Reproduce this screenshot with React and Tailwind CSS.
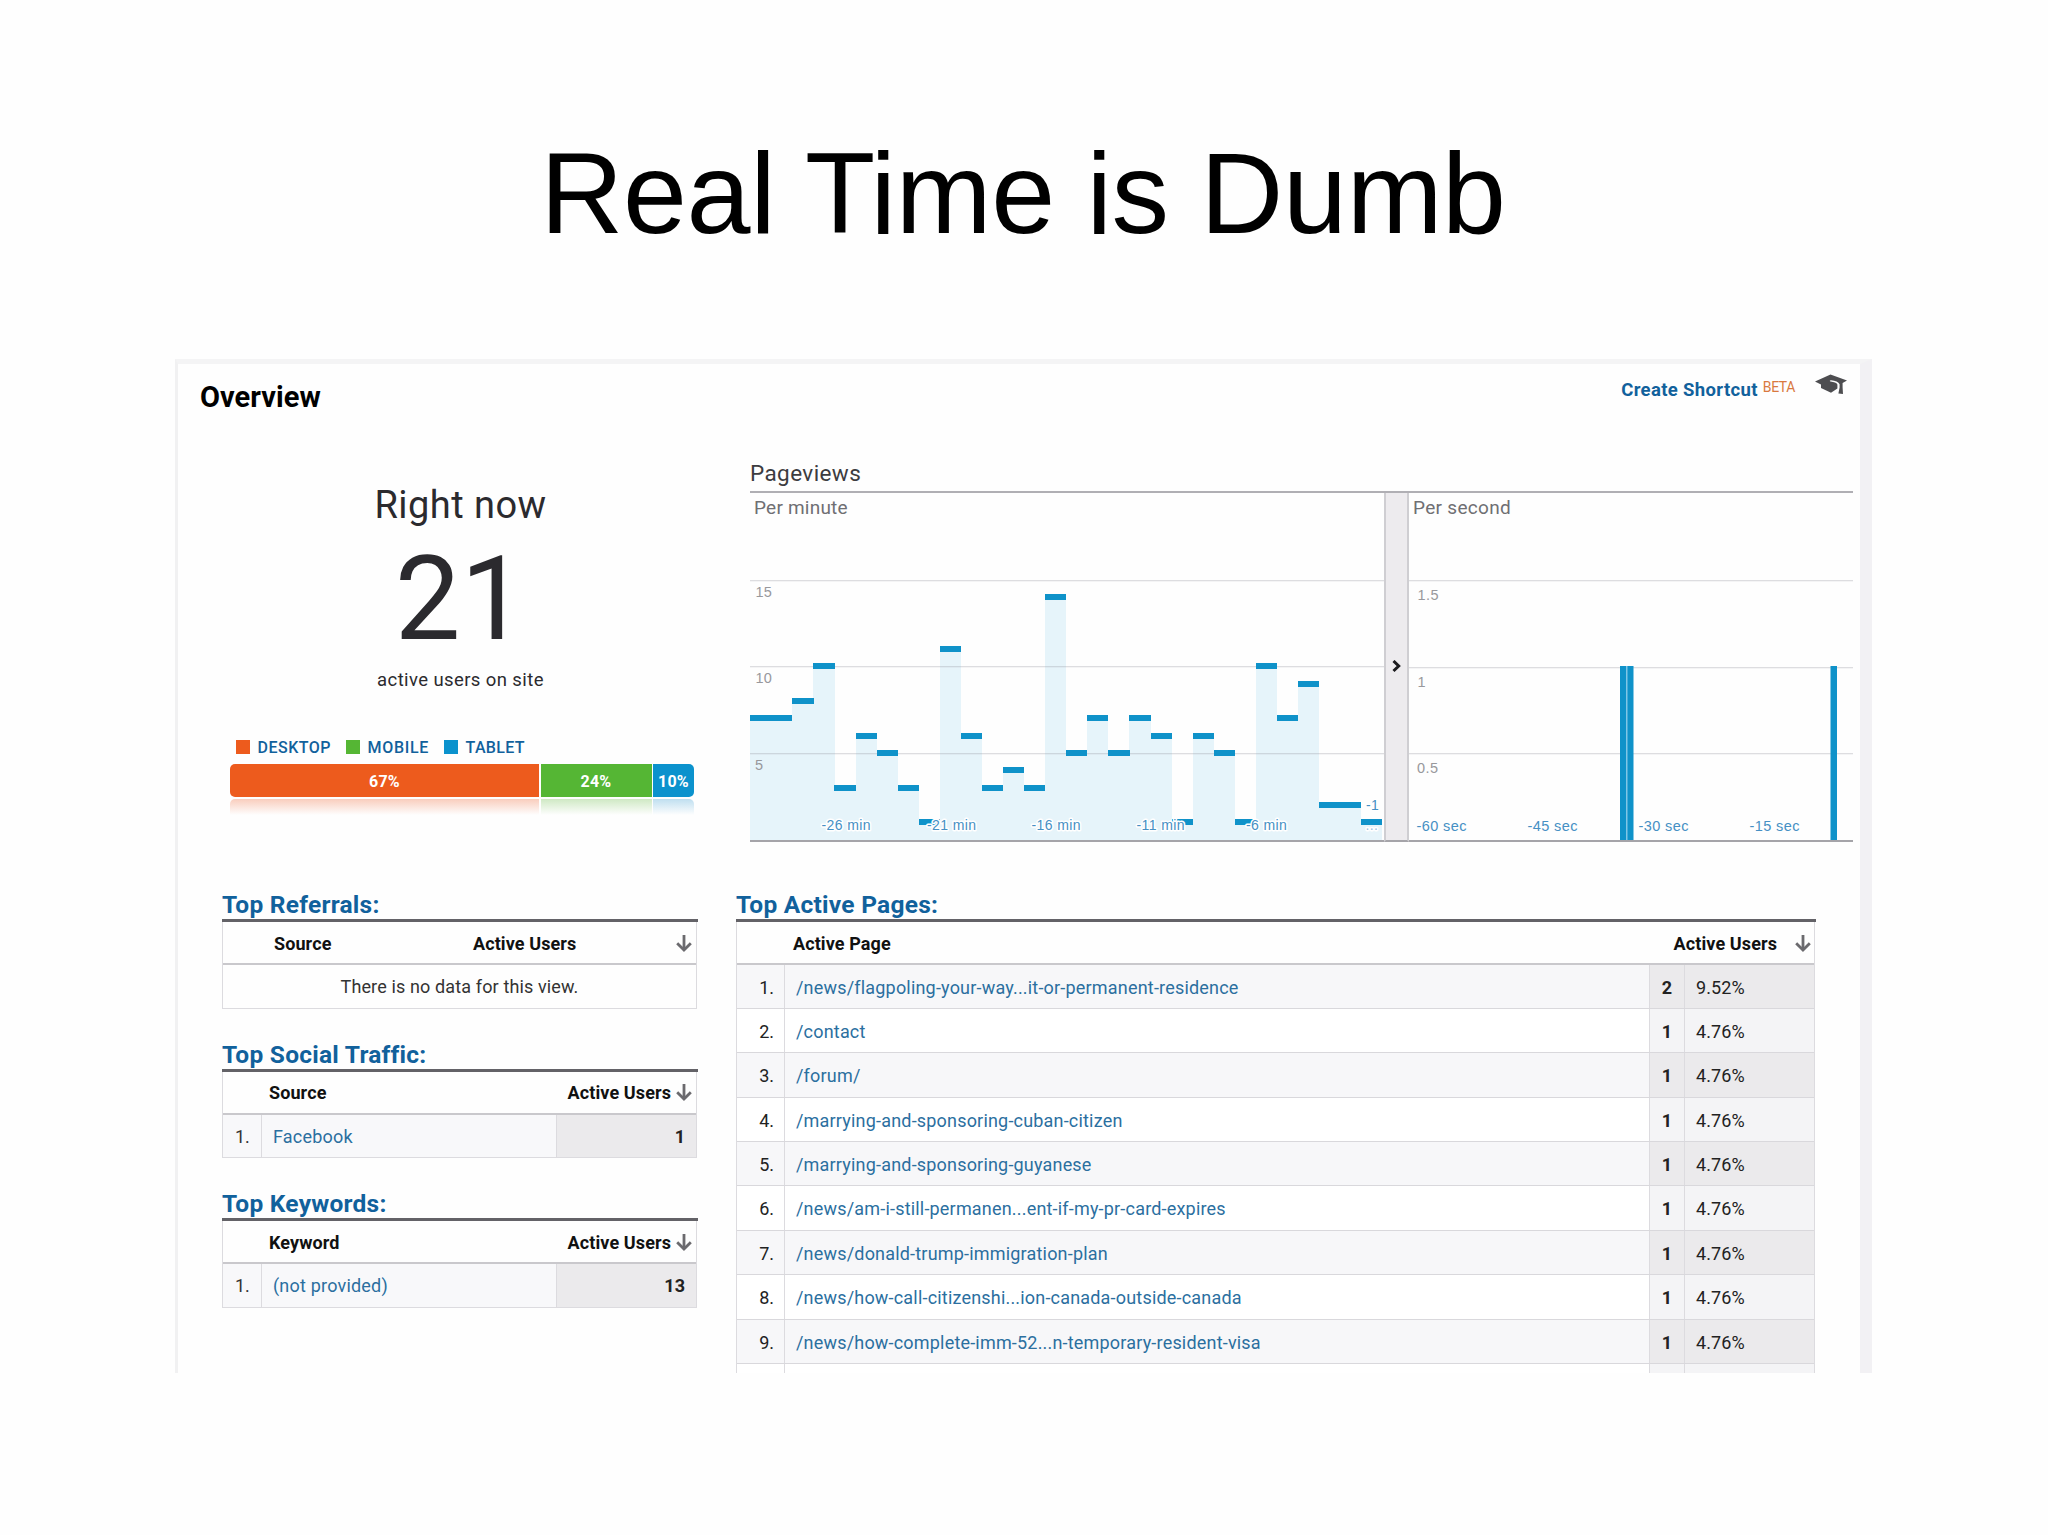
import React from 'react';

const devices = [
  { name: 'DESKTOP', value: '67%', width: 'w-[309px]', bg: 'bg-[#ed5b1d]', fade: 'from-[#f9cdbd]', text: 'tracking-[0.5px] mr-[15px]' },
  { name: 'MOBILE', value: '24%', width: 'w-[111px]', bg: 'bg-[#55b634]', fade: 'from-[#cfe9c4]', text: 'tracking-[0.7px] mr-[15px]' },
  { name: 'TABLET', value: '10%', width: 'w-[41px]', bg: 'bg-[#0b92cd]', fade: 'from-[#bfdff0]', text: 'tracking-[0.3px]' },
];

const perMinute = [
  7, 7, 8, 10, 3, 6, 5, 3, 1, 11, 6, 3, 4, 3, 14,
  5, 7, 5, 7, 6, 1, 6, 5, 1, 10, 7, 9, 2, 2, 1,
];

const minuteLabels = [
  { x: 71.5, text: '-26 min' },
  { x: 177, text: '-21 min' },
  { x: 281.5, text: '-16 min' },
  { x: 386.5, text: '-11 min' },
  { x: 496, text: '-6 min' },
];

const secondLabels = [
  { x: 7.5, text: '-60 sec' },
  { x: 118.5, text: '-45 sec' },
  { x: 229.5, text: '-30 sec' },
  { x: 340.5, text: '-15 sec' },
];

const pages = [
  { path: '/news/flagpoling-your-way...it-or-permanent-residence', users: 2, share: '9.52%' },
  { path: '/contact', users: 1, share: '4.76%' },
  { path: '/forum/', users: 1, share: '4.76%' },
  { path: '/marrying-and-sponsoring-cuban-citizen', users: 1, share: '4.76%' },
  { path: '/marrying-and-sponsoring-guyanese', users: 1, share: '4.76%' },
  { path: '/news/am-i-still-permanen...ent-if-my-pr-card-expires', users: 1, share: '4.76%' },
  { path: '/news/donald-trump-immigration-plan', users: 1, share: '4.76%' },
  { path: '/news/how-call-citizenshi...ion-canada-outside-canada', users: 1, share: '4.76%' },
  { path: '/news/how-complete-imm-52...n-temporary-resident-visa', users: 1, share: '4.76%' },
];

const SortArrow = () => (
  <svg width="16" height="17" viewBox="0 0 16 17" fill="none" stroke="#6b6a6e" strokeWidth="2.8">
    <path d="M8 0V15" />
    <path d="M1.2 8.2L8 15L14.8 8.2" />
  </svg>
);

const GraduationCap = () => (
  <svg width="32" height="21" viewBox="0 0 32 21">
    <path
      fill="#4d4d50"
      d="M0 7.5L15.5 0.5L32 6.5L27.6 9V13.2L28 20L23.4 19.6L24.6 13.4V10.3C23.6 8 20.5 6.5 16 6.2C14.6 6.2 14.4 7.4 15.6 7.6C19 8 21.6 8.8 22.4 10.6V14.6L16 18.8L6 14V10.4Z"
    />
  </svg>
);

// 17.33px per pageview, baseline at y = 320
const minuteY = (v) => 320 - v * 17.33;
const BAR = 21.07;

const MinuteChart = () => (
  <svg className="block" width="634" height="322" viewBox="0 0 634 322" fontFamily="Liberation Sans, Arial, sans-serif" fontSize="14">
    {perMinute.map((v, i) => (
      <rect key={i} x={0.2 + i * BAR} y={minuteY(v)} width={BAR + 0.1} height={v * 17.33} fill="#e6f4fa" shapeRendering="crispEdges" />
    ))}
    {[60, 146, 233].map((y) => (
      <rect key={y} x="0" y={y} width="634" height="1.3" fill="#8a8a92" fillOpacity="0.28" />
    ))}
    {perMinute.map((v, i) => (
      <rect key={i} x={0.2 + i * BAR} y={minuteY(v) - 3.4} width={BAR + 0.1} height="6" fill="#0f92c9" shapeRendering="crispEdges" />
    ))}
    <g fill="#98989c" fontSize="14.5">
      <text x="5.5" y="77" letterSpacing="0.3">15</text>
      <text x="5.5" y="163" letterSpacing="0.3">10</text>
      <text x="5" y="250">5</text>
    </g>
    <g fill="#4690c4" stroke="#fff" strokeWidth="3" strokeLinejoin="round" paintOrder="stroke" letterSpacing="0.4">
      {minuteLabels.map((label) => (
        <text key={label.text} x={label.x} y="310">{label.text}</text>
      ))}
      <text x="616" y="290">-1</text>
      <text x="615.5" y="310" fill="#9cc0de">...</text>
    </g>
    <rect x="0" y="320" width="634" height="2" fill="#a5a4a9" />
  </svg>
);

const SecondChart = () => (
  <svg className="block" width="444" height="322" viewBox="0 0 444 322" fontFamily="Liberation Sans, Arial, sans-serif" fontSize="14.5">
    {[60, 147, 233].map((y) => (
      <rect key={y} x="0" y={y} width="444" height="1.3" fill="#8a8a92" fillOpacity="0.28" />
    ))}
    <rect x="216" y="146" width="3" height="174" fill="#7fc6e6" />
    <rect x="211" y="146" width="6" height="174" fill="#0f92c9" />
    <rect x="218.5" y="146" width="6" height="174" fill="#0f92c9" />
    <rect x="421.5" y="146" width="6.5" height="174" fill="#0f92c9" />
    <g fill="#98989c" letterSpacing="0.5">
      <text x="8.5" y="80">1.5</text>
      <text x="8.5" y="167">1</text>
      <text x="8" y="253">0.5</text>
    </g>
    <g fill="#4690c4" letterSpacing="0.4">
      {secondLabels.map((label) => (
        <text key={label.text} x={label.x} y="311">{label.text}</text>
      ))}
    </g>
    <rect x="0" y="320" width="444" height="2" fill="#a5a4a9" />
  </svg>
);

const TableTitle = ({ children }) => (
  <h2 className="h-8 border-b-[3px] border-[#636267] text-[24.5px] leading-[29px] font-bold tracking-[0.25px] text-[#11619c] whitespace-nowrap">
    {children}
  </h2>
);

const SmallTable = ({ title, column, label, value }) => (
  <section className="h-[149.5px] w-[476px]">
    <TableTitle>{title}</TableTitle>
    <div className="w-[475px] border-x border-b border-[#dcdbdf]">
      <div className="flex h-[43px] items-center border-b-2 border-[#c9c8cc] pt-[1px] pl-[46px] pr-[4px] font-bold tracking-[0.1px] text-[#111]">
        <span className="flex-1">{column}</span>
        <span className="mr-[5px]">Active Users</span>
        <SortArrow />
      </div>
      <div className="flex h-[42.5px] items-stretch leading-[43.5px]">
        <div className="w-[39px] border-r border-[#dcdbdf] bg-[#f8f8fa] pl-[12px] text-[#333]">1.</div>
        <div className="flex-1 bg-[#f8f8fa] pl-[11px] tracking-[0.2px] text-[#2b6f9f]">{label}</div>
        <div className="w-[140px] border-l border-[#dcdbdf] bg-[#ebeaec] pr-[11px] text-right font-bold text-[#222]">{value}</div>
      </div>
    </div>
  </section>
);

const PageRow = ({ index, page }) => {
  const odd = index % 2 === 0;
  const rowBg = odd ? 'bg-[#f7f7f9]' : 'bg-white';
  const numBg = odd ? 'bg-[#ebeaec]' : 'bg-[#f4f4f6]';
  return (
    <div className={`flex h-[44.4px] shrink-0 items-stretch border-b border-[#d9d8dc] leading-[45px] ${rowBg}`}>
      <div className="w-[48px] border-r border-[#dcdbdf] pr-[10px] text-right text-[#222]">{page && `${index + 1}.`}</div>
      <div className="flex-1 pl-[11px] tracking-[0.19px] text-[#2b6f9f]">{page && page.path}</div>
      <div className={`w-[35px] border-l border-[#dcdbdf] pr-[12px] text-right font-bold text-[#222] ${numBg}`}>{page && page.users}</div>
      <div className={`w-[130px] border-l border-[#dcdbdf] pl-[11px] tracking-[0.1px] text-[#222] ${numBg}`}>{page && page.share}</div>
    </div>
  );
};

const App = () => {
  return (
    <div className="flex h-[1535px] w-[2048px] flex-col overflow-hidden bg-[#fefefe]">
      <h1 className="mt-[133px] h-[120px] pr-[2px] text-center font-['Liberation_Sans',Arial,sans-serif] text-[115px] leading-[120px] tracking-[-0.35px] text-black">
        Real Time is Dumb
      </h1>

      <main className="mt-[106px] ml-[175px] flex h-[1014px] w-[1697px] flex-col overflow-hidden border-t-[5px] border-r-[12px] border-l-[3px] border-t-[#f4f4f5] border-r-[#f2f1f4] border-l-[#f1f1f2] font-[Roboto,sans-serif] text-[18px]">
        <header className="flex h-[66px] shrink-0 justify-between pl-[22px] pr-[13px]">
          <h2 className="pt-[18px] text-[29px] leading-[30px] font-bold tracking-[0.05px] text-black">Overview</h2>
          <div className="flex pt-[10px]">
            <span className="pt-[4px] text-[18.5px] leading-[24px] font-bold tracking-[0.35px] text-[#11619c]">Create Shortcut</span>
            <sup className="top-0 ml-[5px] pt-[3px] text-[14px] leading-[20px] tracking-[-0.4px] text-[#d9793f]">BETA</sup>
            <span className="ml-[20px]">
              <GraduationCap />
            </span>
          </div>
        </header>

        <div className="flex h-[460px] shrink-0 pl-[52px]">
          <div className="w-[464px] pt-[55px]">
            <div className="pr-[3px] text-center text-[#2b2a2e]">
              <div className="text-[38px] leading-[40px] tracking-[0.45px]">Right now</div>
              <div className="mt-[14px] text-[117px] leading-[120px]">21</div>
              <div className="mt-[9px] text-[18.5px] leading-[24px] tracking-[0.4px]">active users on site</div>
            </div>
            <div className="mt-[45px] flex h-5 items-center pl-[6px]">
              {devices.map((d) => (
                <div key={d.name} className="flex items-center">
                  <span className={`mr-[8px] size-[13.5px] ${d.bg}`} />
                  <span className={`pt-px text-[16px] leading-5 font-medium text-[#11619c] ${d.text}`}>{d.name}</span>
                </div>
              ))}
            </div>
            <div className="mt-[7px] flex h-[33px] gap-[1.5px] overflow-hidden rounded-[5px]">
              {devices.map((d) => (
                <div key={d.name} className={`text-center text-[16px] leading-[35px] font-bold tracking-[0.2px] text-white ${d.width} ${d.bg}`}>
                  {d.value}
                </div>
              ))}
            </div>
            <div className="mt-[2px] flex h-[16px] gap-[1.5px] overflow-hidden rounded-t-[5px]">
              {devices.map((d) => (
                <div key={d.name} className={`bg-linear-to-b to-transparent ${d.width} ${d.fade}`} />
              ))}
            </div>
          </div>

          <div className="ml-[56px] w-[1103px] pt-[28px]">
            <h3 className="h-[35px] border-b-2 border-[#b0afb4] text-[22.5px] leading-[30px] tracking-[0.4px] text-[#3c3c40]">Pageviews</h3>
            <div className="flex h-[349px]">
              <div className="w-[634px] pt-[3px]">
                <div className="h-6 pl-[4px] text-[19px] leading-6 tracking-[0.22px] text-[#6f6f73]">Per minute</div>
                <MinuteChart />
              </div>
              <div className="flex w-[25px] items-center justify-center border-x-2 border-b-2 border-x-[#cfced2] border-b-[#a5a4a9] bg-[#edebee]">
                <svg width="9" height="13" viewBox="0 0 9 13" fill="none" stroke="#1c1b1e" strokeWidth="3">
                  <path d="M1.5 1L6.7 6L1.5 11" />
                </svg>
              </div>
              <div className="w-[444px] pt-[3px]">
                <div className="h-6 pl-[4px] text-[19px] leading-6 tracking-[0.3px] text-[#6f6f73]">Per second</div>
                <SecondChart />
              </div>
            </div>
          </div>
        </div>

        <div className="flex shrink-0 pl-[44px]">
          <div className="w-[514px]">
            <section className="h-[149.5px] w-[476px]">
              <TableTitle>Top Referrals:</TableTitle>
              <div className="w-[475px] border-x border-b border-[#dcdbdf]">
                <div className="flex h-[43px] items-center border-b-2 border-[#c9c8cc] pt-[2px] pl-[51px] pr-[4px] font-bold tracking-[0.1px] text-[#111]">
                  <span className="w-[199px]">Source</span>
                  <span className="flex-1">Active Users</span>
                  <SortArrow />
                </div>
                <div className="h-[42.5px] text-center leading-[44px] tracking-[0.13px] text-[#333]">There is no data for this view.</div>
              </div>
            </section>
            <SmallTable title="Top Social Traffic:" column="Source" label="Facebook" value="1" />
            <SmallTable title="Top Keywords:" column="Keyword" label="(not provided)" value="13" />
          </div>

          <section className="w-[1080px]">
            <TableTitle>Top Active Pages:</TableTitle>
            <div className="w-[1079px] border-x border-[#dcdbdf]">
              <div className="flex h-[42.5px] items-center border-b-2 border-[#c9c8cc] pt-[2px] pl-[56px] pr-[3px] font-bold tracking-[0.1px] text-[#111]">
                <span className="flex-1">Active Page</span>
                <span className="mr-[18px]">Active Users</span>
                <SortArrow />
              </div>
              {pages.map((page, i) => (
                <PageRow key={page.path} index={i} page={page} />
              ))}
              <PageRow index={9} />
            </div>
          </section>
        </div>
      </main>
    </div>
  );
};

export default App;
